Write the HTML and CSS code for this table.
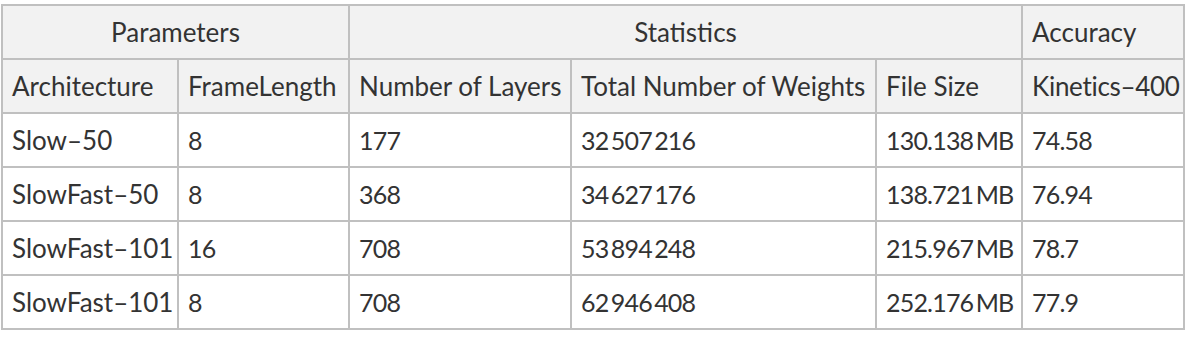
FILE: index.html
```html
<!DOCTYPE html>
<html>
<head>
<meta charset="utf-8">
<link rel="stylesheet" href="styles.css">
</head>
<body>
<table class="grid">
  <colgroup>
    <col class="c1"><col class="c2"><col class="c3"><col class="c4"><col class="c5"><col class="c6">
  </colgroup>
  <thead>
    <tr class="hd">
      <th colspan="2" class="center">Parameters</th>
      <th colspan="3" class="center">Statistics</th>
      <th>Accuracy</th>
    </tr>
    <tr class="hd">
      <th>Architecture</th>
      <th>FrameLength</th>
      <th>Number of Layers</th>
      <th>Total Number of Weights</th>
      <th>File Size</th>
      <th class="tight">Kinetics–400</th>
    </tr>
  </thead>
  <tbody>
    <tr><td>Slow–50</td><td class="num">8</td><td class="num">177</td><td class="num">32&#8201;507&#8201;216</td><td class="num">130.138&#8201;MB</td><td class="num">74.58</td></tr>
    <tr><td>SlowFast–50</td><td class="num">8</td><td class="num">368</td><td class="num">34&#8201;627&#8201;176</td><td class="num">138.721&#8201;MB</td><td class="num">76.94</td></tr>
    <tr><td>SlowFast–101</td><td class="num">16</td><td class="num">708</td><td class="num">53&#8201;894&#8201;248</td><td class="num">215.967&#8201;MB</td><td class="num">78.7</td></tr>
    <tr><td>SlowFast–101</td><td class="num">8</td><td class="num">708</td><td class="num">62&#8201;946&#8201;408</td><td class="num">252.176&#8201;MB</td><td class="num">77.9</td></tr>
  </tbody>
</table>
</body>
</html>
```
FILE: styles.css
```css
html, body {
  margin: 0;
  padding: 0;
  background: #ffffff;
}
body {
  padding: 4px 0 0 1px;
  font-family: "Lato", "Liberation Sans", sans-serif;
  color: #333333;
}
.grid {
  border-collapse: collapse;
  table-layout: fixed;
  width: 1184px;
  font-size: 26px;
}
.c1 { width: 176px; }
.c2 { width: 171px; }
.c3 { width: 222px; }
.c4 { width: 305px; }
.c5 { width: 146px; }
.c6 { width: 162px; }
.grid th, .grid td {
  border: 2px solid #c0c0c0;
  height: 52px;
  padding: 0 0 0 9px;
  text-align: left;
  font-weight: normal;
  white-space: nowrap;
  overflow: hidden;
  vertical-align: middle;
}
.grid .hd th {
  background: #f2f2f2;
}
.grid th.center {
  text-align: center;
  padding: 0;
}
.grid th.tight {
  letter-spacing: -0.3px;
}
.grid td.num {
  font-size: 25px;
  letter-spacing: -0.8px;
}
```
